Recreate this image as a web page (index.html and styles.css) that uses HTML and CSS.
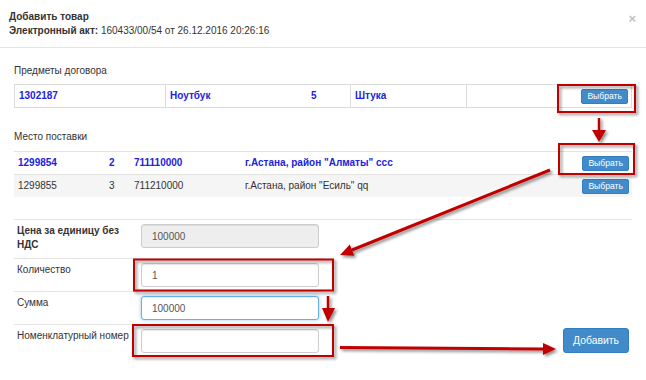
FILE: index.html
```html
<!DOCTYPE html>
<html lang="ru">
<head>
  <meta charset="UTF-8">
  <title>Добавить товар</title>
  <link rel="stylesheet" href="styles.css">
</head>
<body>
  <div class="modal">
    <div class="modal-header">
      <div class="modal-title">
        <div class="title">Добавить товар</div>
        <div><b>Электронный акт:</b> 160433/00/54 от 26.12.2016 20:26:16</div>
      </div>
      <span class="close">×</span>
    </div>

    <div class="modal-body">
      <div class="section-title">Предметы договора</div>
      <table class="grid bordered">
        <tr class="selected">
          <td class="c-code">1302187</td>
          <td class="c-name">Ноутбук</td>
          <td class="c-qty no-left">5</td>
          <td class="c-unit">Штука</td>
          <td class="c-action"><button class="btn btn-xs">Выбрать</button></td>
        </tr>
      </table>

      <div class="section-title place">Место поставки</div>
      <table class="grid striped">
        <tr class="selected">
          <td class="p-code">1299854</td>
          <td class="p-num">2</td>
          <td class="p-kato">711110000</td>
          <td>г.Астана, район "Алматы" ссс</td>
          <td class="c-action"><button class="btn btn-xs">Выбрать</button></td>
        </tr>
        <tr>
          <td class="p-code">1299855</td>
          <td class="p-num">3</td>
          <td class="p-kato">711210000</td>
          <td>г.Астана, район "Есиль" qq</td>
          <td class="c-action"><button class="btn btn-xs">Выбрать</button></td>
        </tr>
      </table>

      <div class="item-form">
        <div class="fields">
          <div class="field first">
            <label class="strong">Цена за единицу без НДС</label>
            <input type="text" value="100000" disabled>
          </div>
          <div class="field">
            <label>Количество</label>
            <input type="text" value="1">
          </div>
          <div class="field">
            <label>Сумма</label>
            <input type="text" class="focus" value="100000">
          </div>
          <div class="field">
            <label>Номенклатурный номер</label>
            <input type="text" value="">
          </div>
        </div>
        <button class="btn btn-add">Добавить</button>
      </div>
    </div>

    <!-- annotation marks drawn over the form -->
    <svg class="marks" width="646" height="380" viewBox="0 0 646 380">
      <defs>
        <filter id="shadow" x="-20%" y="-20%" width="140%" height="140%">
          <feDropShadow dx="2" dy="2" stdDeviation="1.4" flood-color="#000" flood-opacity="0.45"/>
        </filter>
      </defs>
      <g filter="url(#shadow)" fill="none" stroke="#c00000" stroke-width="2">
        <rect x="558" y="85" width="77" height="27"/>
        <rect x="559" y="144" width="75" height="30"/>
        <rect x="134" y="259.5" width="199" height="31"/>
        <rect x="133" y="325" width="200" height="31"/>
      </g>
      <g filter="url(#shadow)" fill="#c00000" stroke="#c00000">
        <line x1="599" y1="118" x2="599" y2="131" stroke-width="2.5"/>
        <polygon points="592,130 606,130 599,142" stroke="none"/>

        <line x1="550" y1="170" x2="352" y2="250" stroke-width="3"/>
        <polygon points="340,255 354.3,255.7 349.8,244.6" stroke="none"/>

        <line x1="328" y1="296" x2="328" y2="309" stroke-width="2.5"/>
        <polygon points="322,308 335,308 328,322" stroke="none"/>

        <line x1="340" y1="347.5" x2="545" y2="349" stroke-width="3"/>
        <polygon points="543,343 543,355 556,349" stroke="none"/>
      </g>
    </svg>
  </div>
</body>
</html>
```

FILE: styles.css
```css
html, body {
  margin: 0;
  padding: 0;
  background: #fff;
  font-family: "Liberation Sans", Arial, sans-serif;
  font-size: 10px;
  line-height: 14px;
  color: #333;
}
.modal {
  position: relative;
  width: 646px;
  height: 380px;
  overflow: hidden;
}
.modal-header {
  display: flex;
  justify-content: space-between;
  align-items: flex-start;
  padding: 10px 10px 9px 9px;
  border-bottom: 1px solid #e5e5e5;
}
.title {
  font-weight: bold;
}
.close {
  font-size: 13px;
  font-weight: bold;
  line-height: 14px;
  color: #c2c2c2;
  margin-top: 2px;
}
.modal-body {
  padding: 0 14px;
}
.section-title {
  margin-top: 16px;
  margin-bottom: 6px;
}
.section-title.place {
  margin-top: 22px;
  margin-bottom: 7px;
}
.grid {
  width: 100%;
  border-collapse: collapse;
}
.grid td {
  height: 22px;
  padding: 0 4px;
  vertical-align: middle;
  white-space: nowrap;
}
.bordered td {
  border: 1px solid #dcdcdc;
}
.bordered td.no-left {
  border-left: none;
}
.bordered td.c-name {
  border-right: none;
}
.c-code { width: 142px; }
.c-name { width: 133px; }
.c-qty { width: 35px; }
.c-unit { width: 107px; }
.striped td {
  border-top: 1px solid #e2e2e2;
}
.striped tr:nth-child(2) td {
  background: #f5f5f5;
}
.p-code { width: 83px; }
.p-num { width: 17px; }
.p-kato { width: 103px; }
.grid td.c-action {
  text-align: right;
  padding-right: 3px;
}
.selected td {
  font-weight: bold;
  color: #2222e0;
}
.btn {
  font-family: inherit;
  color: #fff;
  background: #428bca;
  border: 1px solid #357ebd;
  border-radius: 2px;
  cursor: pointer;
}
.btn-xs {
  height: 15px;
  padding: 0 5px;
  font-size: 8.6px;
  line-height: 13px;
  font-weight: normal;
  vertical-align: middle;
}
.item-form {
  display: flex;
  justify-content: space-between;
  align-items: flex-end;
  margin-top: 22px;
  border-top: 1px solid #e5e5e5;
}
.fields {
  width: 310px;
}
.field {
  display: grid;
  grid-template-columns: 124px 178px;
  align-items: start;
  padding: 4px 0 4px 3px;
  border-top: 1px solid #e5e5e5;
}
.field.first {
  border-top: none;
  padding-bottom: 6px;
}
.field label {
  padding-right: 7px;
}
.field label.strong {
  font-weight: bold;
}
.field input {
  box-sizing: border-box;
  width: 178px;
  height: 24px;
  margin: 0;
  padding: 0 10px;
  font-family: inherit;
  font-size: 10px;
  color: #555;
  background: #fff;
  border: 1px solid #ccc;
  border-radius: 3px;
  box-shadow: inset 0 1px 1px rgba(0,0,0,0.075);
}
.field input:disabled {
  background: #eee;
}
.field input.focus {
  border-color: #66afe9;
  box-shadow: inset 0 1px 1px rgba(0,0,0,0.075), 0 0 4px rgba(102,175,233,0.6);
}
.btn-add {
  height: 25px;
  padding: 0 9px;
  font-size: 10.4px;
  margin: 0 3px 4px 0;
  border-radius: 3px;
}
.marks {
  position: absolute;
  top: 0;
  left: 0;
  pointer-events: none;
}
```
